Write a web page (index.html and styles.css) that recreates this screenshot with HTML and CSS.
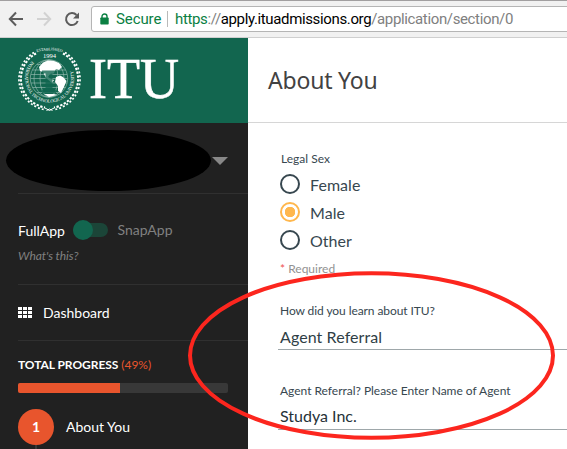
FILE: index.html
```html
<!DOCTYPE html>
<html lang="en">
<head>
<meta charset="utf-8">
<title>About You</title>
<link rel="stylesheet" href="styles.css">
</head>
<body>
<div class="browser-bar">
  <svg class="nav-icons" width="91" height="36" viewBox="0 0 91 36" fill="none" stroke-width="2">
    <path d="M23 18H10.500M16 11.500L9.800 18L16 24.500" stroke="#5c5c5c"/>
    <path d="M37 18H49.500M44 11.500L50.200 18L44 24.500" stroke="#d2d2d2"/>
    <path d="M76.500 14A6 6 0 1 0 77.700 20" stroke="#5c5c5c"/>
    <path d="M79 11.500V17.500H73z" fill="#5c5c5c"/>
  </svg>
  <div class="address">
    <svg class="lock" width="9" height="12" viewBox="0 0 9 12"><path d="M2 5V3.500a2.500 2.500 0 0 1 5 0V5" fill="none" stroke="#0b8043" stroke-width="1.400"/><rect x="0.300" y="4.500" width="8.400" height="7" rx="0.800" fill="#0b8043"/></svg>
    <span class="secure">Secure</span>
    <span class="url"><span class="scheme">https</span><span class="dim">://</span>apply.ituadmissions.org<span class="dim">/application/section/0</span></span>
  </div>
</div>
<div class="app">
  <aside class="sidebar">
    <div class="brand">
      <svg class="crest" width="64" height="64" viewBox="0 0 64 64">
        <defs>
          <path id="ring-low" d="M14 13A24.500 24.500 0 1 0 49 13"/>
          <path id="ring-top" d="M18 4.500Q31.500 0 45 4.500"/>
        </defs>
        <g fill="none" stroke="#fff">
          <path d="M18 5.500A29 29 0 0 0 27 59.500M45 5.500A29 29 0 0 1 36 59.500" stroke-width="2" stroke-dasharray="2.400 1.500"/>
          <path d="M16 4.500A31 31 0 0 0 26 61.500M47 4.500A31 31 0 0 1 37 61.500" stroke-width="1.700" stroke-dasharray="2 2"/>
          <path d="M27 60L31.500 62.500L36 60M28.500 62.500L31.500 61L34.500 62.500" stroke-width="1"/>
          <g stroke-width="0.600" opacity="0.600"><circle cx="31" cy="30.500" r="18.700"/><ellipse cx="31" cy="30.500" rx="9" ry="18.500"/><ellipse cx="31" cy="30.500" rx="15" ry="18.500"/><path d="M12.500 30.500H49.500M14.500 22H47.500M14.500 39.500H47.500M19 16.500H43M19 44.500H43M13 26.500H49M13 35H49"/></g>
        </g>
        <path fill="#fff" d="M21 19L25 14.500L30 12.500L36 13L41 15L44 19L41 22L38 21L36 25L32 26L30 29L33 31L36 32L34 35L28 30L25 24L22 23ZM38 29L42 27.500L45 29L48.500 33L46 39L43 45L40 43L40 38L37 34ZM26 46L36 46L39 47L31 49Z"/>
        <path d="M24 22.500H38V25.500H34.500V42H38V45H24V42H27.500V25.500H24Z" fill="#126650" opacity="0.800"/>
        <g class="crest-text">
          <text font-size="4.600" textLength="103"><textPath href="#ring-low">INTERNATIONAL TECHNOLOGICAL UNIVERSITY</textPath></text>
          <text font-size="3.900"><textPath href="#ring-top" startOffset="50%" text-anchor="middle">ESTABLISHED</textPath></text>
          <text x="31.500" y="10.200" font-size="6.600" text-anchor="middle">1994</text>
        </g>
      </svg>
      <svg class="wordmark" width="100" height="78" viewBox="0 0 100 78"><text x="0" y="52.500" textLength="90" lengthAdjust="spacingAndGlyphs">ITU</text></svg>
    </div>
    <div class="account"><div class="redaction"></div><div class="caret"></div></div>
    <div class="mode">
      <div class="switch-row"><span class="full">FullApp</span><span class="switch"></span><span class="snap">SnapApp</span></div>
      <div class="hint">What's this?</div>
    </div>
    <div class="dashboard">
      <svg width="14" height="12" viewBox="0 0 14 12" fill="#fff"><path d="M0 0h4v3H0zM5 0h4v3H5zM10 0h4v3h-4zM0 4h4v3H0zM5 4h4v3H5zM10 4h4v3h-4zM0 8h4v3H0zM5 8h4v3H5zM10 8h4v3h-4z"/></svg>
      <span>Dashboard</span>
    </div>
    <div class="progress">
      <div class="progress-title"><b>TOTAL PROGRESS</b> <span>(49%)</span></div>
      <div class="track"><div class="fill"></div></div>
      <div class="step"><span class="num">1</span><span class="step-name">About You</span></div>
      <div class="stem"></div>
    </div>
  </aside>
  <main>
    <header><h1>About You</h1></header>
    <form>
      <div class="label legal">Legal Sex</div>
      <div class="option"><i></i><span>Female</span></div>
      <div class="option selected"><i></i><span>Male</span></div>
      <div class="option"><i></i><span>Other</span></div>
      <div class="required"><em>*</em> Required</div>
      <div class="field"><div class="label learn">How did you learn about ITU?</div><div class="value agent">Agent Referral</div></div>
      <div class="field"><div class="label name">Agent Referral? Please Enter Name of Agent</div><div class="value studya">Studya Inc.</div></div>
    </form>
  </main>
</div>
<svg class="highlight" width="567" height="449" viewBox="0 0 567 449"><ellipse cx="371.500" cy="355.500" rx="181.500" ry="82.300"/></svg>
</body>
</html>
```
FILE: styles.css
```css
* { box-sizing: border-box; }
body { margin: 0; width: 567px; height: 449px; overflow: hidden; background: #fff; font-family: Lato, sans-serif; position: relative; }
.browser-bar { height: 38px; display: flex; background: #f1f1f1; border-top: 1px solid #a19fa0; border-bottom: 1px solid #cfcfcf; }
.nav-icons { flex: none; }
.address { flex: none; width: 500px; height: 26px; margin-top: 5px; display: flex; align-items: center; background: #fff; border: 1px solid #b5b5b5; border-radius: 3px; padding-left: 8px; font: 15px/24px Roboto, sans-serif; white-space: nowrap; }
.lock { margin-right: 7px; }
.secure { color: #0b8043; width: 52px; height: 16px; line-height: 16px; border-right: 1px solid #b9b9b9; margin-right: 7px; letter-spacing: -0.100px; }
.url { color: #000; letter-spacing: -0.360px; }
.scheme { color: #0b8043; }
.dim { color: #808080; }
.app { display: flex; height: 411px; }
.sidebar { width: 248px; flex: none; background: #212121; color: #fff; }
.brand { height: 85px; background: #12664f; display: flex; padding: 10px 0 0 18px; }
.crest { flex: none; overflow: visible; }
.crest-text { fill: #fff; font-family: "Liberation Serif", serif; }
.wordmark { margin: -3px 0 0 7px; }
.wordmark text { fill: #fff; stroke: #fff; stroke-width: 0.600; font: 56px "Liberation Serif", serif; }
.account { height: 71px; margin-left: 18px; border-bottom: 1px solid #303030; display: flex; align-items: flex-start; }
.redaction { width: 205px; height: 61px; margin: 7px 1px 0 -12px; background: #000; border-radius: 50%; }
.caret { margin: 34px 0 0; border: solid transparent; border-width: 8px 8px 0; border-top-color: #888; }
.mode { margin-left: 18px; height: 91px; padding-top: 26px; border-bottom: 1px solid #303030; }
.switch-row { display: flex; height: 20px; align-items: center; font-size: 14px; line-height: 20px; }
.full { width: 55px; padding-top: 1px; }
.switch { width: 35px; height: 14px; border-radius: 7px; background: #1b4538; display: flex; align-items: center; }
.switch::before { content: ""; width: 20px; height: 20px; flex: none; border-radius: 50%; background: #12664f; }
.snap { color: #808080; margin-left: 9.500px; }
.hint { color: #808080; font-size: 12px; font-style: italic; line-height: 16px; margin-top: 8px; letter-spacing: -0.050px; }
.dashboard { height: 56px; margin-left: 18px; border-bottom: 1px solid #303030; display: flex; align-items: center; gap: 11px; font-size: 14px; }
.dashboard span { margin-top: -1px; }
.progress { margin-left: 18px; width: 210px; }
.progress-title { font-size: 12px; line-height: 16px; padding-top: 16px; white-space: nowrap; letter-spacing: -0.050px; }
.progress-title span { color: #e8552d; }
.track { height: 10px; margin-top: 10px; border-radius: 2px; background: #383838; overflow: hidden; }
.fill { width: 102px; height: 10px; background: #e8552d; }
.step { display: flex; align-items: center; margin-top: 16px; font-size: 14px; }
.step-name { margin-top: -2px; }
.num { width: 36px; height: 36px; border-radius: 50%; background: #e8552d; text-align: center; font: bold 14px/36px Lato, sans-serif; margin-right: 12px; }
.stem { width: 2px; height: 8px; margin-left: 17px; background: #383838; }
main { flex: 1; }
header { height: 85px; border-bottom: 1px solid #d6d6d6; padding-left: 20px; }
h1 { margin: 0; font: 23px/84px "Noto Sans", sans-serif; letter-spacing: -0.200px; color: #424242; white-space: nowrap; }
form { padding: 27px 0 0 30px; color: #37474f; white-space: nowrap; }
.label { font-size: 12px; line-height: 16px; letter-spacing: -0.080px; }
.name { letter-spacing: -0.020px; }
.legal { margin: 1px 0 3px 3px; letter-spacing: 0; }
.option { display: flex; align-items: center; height: 28px; font-size: 16px; margin-left: 2px; letter-spacing: 0.050px; }
.option i { width: 20px; height: 20px; border: 2px solid #37474f; border-radius: 50%; margin-right: 10px; }
.option span { padding-top: 1px; }
.option.selected i { border-color: #ffb74d; background: radial-gradient(circle, #ffb74d 5px, #fff 5.500px); }
.required { font-size: 12px; line-height: 16px; color: #929292; margin: 7px 0 26px 2px; }
.required em { color: #ef5350; font-style: normal; }
.field { height: 47px; border-bottom: 1px solid #9ea7aa; margin-bottom: 33px; padding-left: 2px; }
.value { font-size: 16px; line-height: 22px; margin-top: 7px; color: #2f3e46; letter-spacing: 0.080px; }
.studya { margin-top: 6px; letter-spacing: 0; color: #263238; }
.highlight { position: absolute; inset: 0; }
.highlight ellipse { fill: none; stroke: #fc261e; stroke-width: 4; }
```
